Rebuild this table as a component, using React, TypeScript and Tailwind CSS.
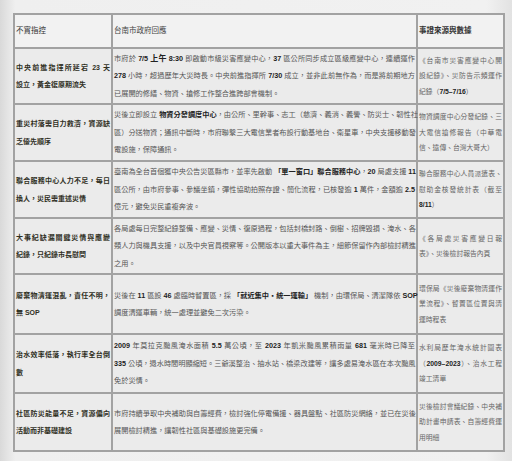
import React from 'react';

function B({ children }: { children: React.ReactNode }) {
  return <span className="font-bold text-[#222]">{children}</span>;
}

interface Row {
  claim: string[];
  h: string;
  resp: React.ReactNode[];
  src: React.ReactNode[];
}

const rows: Row[] = [
  {
    claim: ['中央前進指揮所延宕 23 天', '設立，黃金復原期流失'],
    h: 'h-[56px]',
    resp: [
      <>
        市府於 <B>7/5 <span className="text-[8px]">上午</span> 8:30</B> 即啟動市級災害應變中心，<B>37</B> 區公所同步成立區級應變中心，連續運作
      </>,
      <>
        <B>278</B> 小時，超過歷年大災時長。中央前進指揮所 <B>7/30</B> 成立，並非此前無作為，而是將前期地方
      </>,
      <>已展開的修繕、物資、搶修工作整合進跨部會機制。</>,
    ],
    src: [
      <>《台南市災害應變中心開</>,
      <>設紀錄》、災防告示頻運作</>,
      <>
        紀錄（<B>7/5–7/16</B>）
      </>,
    ],
  },
  {
    claim: ['重災村落需自力救濟，資源缺', '乏優先順序'],
    h: 'h-[57px]',
    resp: [
      <>
        災後立即設立 <B>物資分發調度中心</B>，由公所、里幹事、志工（慈濟、義消、義警、防災士、韌性社
      </>,
      <>區）分送物資；通訊中斷時，市府聯繫三大電信業者布設行動基地台、衛星車，中央支援移動發</>,
      <>電設施，保障通訊。</>,
    ],
    src: [<>物資調度中心分發紀錄、三</>, <>大電信搶修報告（中華電</>, <>信、遠傳、台灣大哥大）</>],
  },
  {
    claim: ['聯合服務中心人力不足，每日', '換人，災民需重述災情'],
    h: 'h-[57px]',
    resp: [
      <>
        臺南為全台首個獲中央公告災區縣市，並率先啟動 <B>「單一窗口」聯合服務中心</B>，<B>20</B> 局處支援 <B>11</B>
      </>,
      <>
        區公所，由市府參事、參議坐鎮，彈性協助拍照存證、簡化流程，已核發逾 <B>1</B> 萬件，金額逾 <B>2.5</B>
      </>,
      <>億元，避免災民重複奔波。</>,
    ],
    src: [
      <>聯合服務中心人員派遣表、</>,
      <>慰助金核發統計表（截至</>,
      <>
        <B>8/11</B>）
      </>,
    ],
  },
  {
    claim: ['大事紀缺漏關鍵災情與應變', '紀錄，只紀錄市長慰問'],
    h: 'h-[56px]',
    resp: [
      <>各局處每日完整紀錄整備、應變、災情、復原過程，包括封橋封路、倒樹、招牌毀損、淹水、各</>,
      <>類人力與機具支援，以及中央官員視察等。公開版本以重大事件為主，細節保留作內部檢討精進</>,
      <>之用。</>,
    ],
    src: [<>《各局處災害應變日報</>, <>表》、災後檢討報告內頁</>],
  },
  {
    claim: ['廢棄物清運混亂，責任不明，', '無 SOP'],
    h: 'h-[60px]',
    resp: [
      <>
        災後在 <B>11</B> 區設 <B>46</B> 處臨時暫置區，採 <B>「就近集中・統一運輸」</B> 機制，由環保局、清潔隊依 <B>SOP</B>
      </>,
      <>調度清運車輛，統一處理並避免二次污染。</>,
    ],
    src: [<>環保局《災後廢棄物清運作</>, <>業流程》、暫置區位置與清</>, <>運時程表</>],
  },
  {
    claim: ['治水效率低落，執行率全台倒', '數'],
    h: 'h-[59px]',
    resp: [
      <>
        <B>2009</B> 年莫拉克颱風淹水面積 <B>5.5</B> 萬公頃，至 <B>2023</B> 年凱米颱風累積雨量 <B>681</B> 毫米時已降至
      </>,
      <>
        <B>335</B> 公頃，退水時間明顯縮短。三爺溪整治、抽水站、橋梁改建等，讓多處易淹水區在本次颱風
      </>,
      <>免於災情。</>,
    ],
    src: [
      <>水利局歷年淹水統計圖表</>,
      <>
        （<B>2009–2023</B>）、治水工程
      </>,
      <>竣工清單</>,
    ],
  },
  {
    claim: ['社區防災能量不足，資源偏向', '活動而非基礎建設'],
    h: 'h-[58px]',
    resp: [
      <>市府持續爭取中央補助與自籌經費，檢討強化停電備援、器具盤點、社區防災網絡，並已在災後</>,
      <>展開檢討精進，讓韌性社區與基礎設施更完備。</>,
    ],
    src: [<>災後檢討會議紀錄、中央補</>, <>助計畫申請表、自籌經費運</>, <>用明細</>],
  },
];

// one block per printed line; all but the last are spread to the full cell width
function Lines({ lines }: { lines: React.ReactNode[] }) {
  return (
    <>
      {lines.map((l, i) => (
        <div key={i} className={i < lines.length - 1 ? 'whitespace-nowrap [text-align-last:justify]' : 'whitespace-nowrap'}>
          {l}
        </div>
      ))}
    </>
  );
}

const cell = 'border-2 border-[#a2a2a2] align-middle px-[1px] text-justify';

export default function App() {
  return (
    <div className="min-h-screen bg-[linear-gradient(to_right,#d9d9d9,#efefef_3%,#f1f1f1_95%,#e2e2e2)] pl-[13px] pt-[13px] font-['Liberation_Sans','Noto_Sans_CJK_TC',sans-serif]">
      <table className="w-[490px] table-fixed border-collapse bg-[#ebebeb]">
        <colgroup>
          <col className="w-[98px]" />
          <col className="w-[305px]" />
          <col className="w-[87px]" />
        </colgroup>
        <tbody>
          {/* header */}
          <tr className="h-[34px] bg-[#f2f2f2]">
            <td className={`${cell} text-[7.5px] text-[#333]`}>不實指控</td>
            <td className={`${cell} text-[7.5px] text-[#444]`}>台南市政府回應</td>
            <td className={`${cell} text-[7.5px] font-bold text-[#333]`}>事證來源與數據</td>
          </tr>
          {rows.map((r, i) => (
            <tr key={i} className={r.h}>
              <td className={`${cell} text-[7px] leading-[17.5px] font-bold text-[#30301f]`}>
                <Lines lines={r.claim} />
              </td>
              <td className={`${cell} text-[7.2px] leading-[17.5px] text-[#555]`}>
                <Lines lines={r.resp} />
              </td>
              <td className={`${cell} text-[6.8px] leading-[15.5px] text-[#666]`}>
                <Lines lines={r.src} />
              </td>
            </tr>
          ))}
        </tbody>
      </table>
    </div>
  );
}
